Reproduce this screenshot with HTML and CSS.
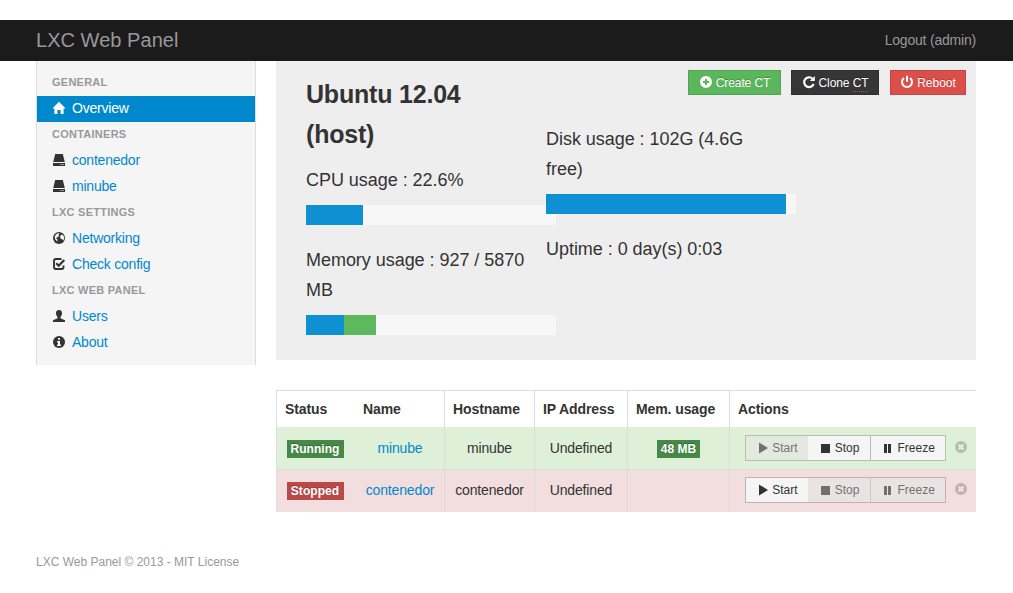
FILE: index.html
```html
<!DOCTYPE html>
<html lang="en">
<head>
<meta charset="utf-8">
<title>LXC Web Panel</title>
<link rel="stylesheet" href="styles.css">
</head>
<body>
<svg class="defs" width="0" height="0">
  <symbol id="home" viewBox="0 0 14 14"><path d="M7 .8 13.6 7.500H11.600V13H8.600V9H5.400V13H2.400V7.500H.4Z"/></symbol>
  <symbol id="hdd" viewBox="0 0 14 14"><path d="M3.200 1h7.600L12.800 9H1.200ZM1 10h12v3H1Z"/><path class="gap" d="M8.500 11h1v1h-1zM10.500 11h1v1h-1z"/></symbol>
  <symbol id="globe" viewBox="0 0 14 14"><circle cx="7" cy="7" r="6"/><path class="gap" d="M7.500 2 6 3.500l1 .8L5.800 6 3.500 7l1.800 1.500L5 10.500 3 8.500 2.300 6 3.500 3.500 5.500 2.200ZM9 3.500l2.200 1L12 7l-1 2.500L9.500 8 8 7.500 7.800 5.500Z" transform="translate(.3 0)"/></symbol>
  <symbol id="check" viewBox="0 0 14 14"><path d="M9.500 2H4Q2 2 2 4v6q0 2 2 2h5.500q2 0 2-2V8.500" fill="none" stroke="currentColor" stroke-width="1.900"/><path d="M4.200 6.200 6.700 8.700 12.300 3" fill="none" stroke="currentColor" stroke-width="2.200"/></symbol>
  <symbol id="user" viewBox="0 0 14 14"><path d="M7 1c2.300 0 3.200 1.600 3 3.600-.1 1.500-.7 2.600-1.500 3.300v1.300L13 11.300V13H1v-1.700l4.500-2.100V7.900C4.700 7.200 4.100 6.100 4 4.600 3.800 2.600 4.700 1 7 1Z"/></symbol>
  <symbol id="info" viewBox="0 0 14 14"><circle cx="7" cy="7" r="6"/><path class="gap" d="M6 3h2v1.800H6zM5 6h3v3.500h1V11H5V9.500h1v-2H5z"/></symbol>
  <symbol id="plus" viewBox="0 0 14 14"><path fill-rule="evenodd" d="M7 1a6 6 0 1 0 0 12A6 6 0 0 0 7 1ZM6 4h2v2h2v2H8v2H6V8H4V6h2Z"/></symbol>
  <symbol id="repeat" viewBox="0 0 14 14"><path d="M11.600 9A4.900 4.900 0 1 1 10.300 3.500" fill="none" stroke="currentColor" stroke-width="2.200"/><path d="M12.800 1v5H7.800Z"/></symbol>
  <symbol id="power" viewBox="0 0 14 14"><path d="M4 3A5 5 0 1 0 10 3" fill="none" stroke="currentColor" stroke-width="2"/><path d="M6 .8h2v6H6z"/></symbol>
  <symbol id="play" viewBox="0 0 14 14"><path d="M3 1.500 12 7 3 12.500Z"/></symbol>
  <symbol id="stop" viewBox="0 0 14 14"><path d="M2 3h9v9H2z"/></symbol>
  <symbol id="pause" viewBox="0 0 14 14"><path d="M2 3h3v9H2zM6 3h3v9H6z"/></symbol>
  <symbol id="remove" viewBox="0 0 14 14"><path fill-rule="evenodd" d="M7 1a6 6 0 1 0 0 12A6 6 0 0 0 7 1ZM5 4 7 5 9 4 10 5 9 7 10 9 9 10 7 9 5 10 4 9 5 7 4 5Z"/></symbol>
</svg>
<header class="navbar">
  <a class="brand">LXC Web Panel</a>
  <a class="logout">Logout (admin)</a>
</header>
<div class="container">
  <nav class="sidebar">
    <h6>GENERAL</h6>
    <a class="active"><svg class="icon"><use href="#home"/></svg><span>Overview</span></a>
    <h6>CONTAINERS</h6>
    <a><svg class="icon"><use href="#hdd"/></svg><span>contenedor</span></a>
    <a><svg class="icon"><use href="#hdd"/></svg><span>minube</span></a>
    <h6>LXC SETTINGS</h6>
    <a><svg class="icon"><use href="#globe"/></svg><span>Networking</span></a>
    <a><svg class="icon"><use href="#check"/></svg><span>Check config</span></a>
    <h6>LXC WEB PANEL</h6>
    <a><svg class="icon"><use href="#user"/></svg><span>Users</span></a>
    <a><svg class="icon"><use href="#info"/></svg><span>About</span></a>
  </nav>
  <main>
    <section class="hero">
      <div class="column">
        <h3>Ubuntu 12.04 (host)</h3>
        <p>CPU usage : 22.6%</p>
        <div class="progress"><div class="bar" style="width:57px"></div></div>
        <p>Memory usage : 927 / 5870 MB</p>
        <div class="progress"><div class="bar" style="width:38px"></div><div class="bar cache" style="width:32px"></div></div>
      </div>
      <div class="column second">
        <p class="disk">Disk usage : 102G (4.6G free)</p>
        <div class="progress"><div class="bar" style="width:240px"></div></div>
        <p>Uptime : 0 day(s) 0:03</p>
      </div>
      <div class="tools">
        <a class="btn create"><svg class="icon"><use href="#plus"/></svg><span>Create <abbr>CT</abbr></span></a>
        <a class="btn clone"><svg class="icon"><use href="#repeat"/></svg><span>Clone <abbr>CT</abbr></span></a>
        <a class="btn reboot"><svg class="icon"><use href="#power"/></svg><span>Reboot</span></a>
      </div>
    </section>
    <table>
      <colgroup><col class="c1"><col class="c2"><col class="c3"><col class="c4"><col class="c5"><col class="c6"></colgroup>
      <thead><tr><th>Status</th><th class="plain">Name</th><th>Hostname</th><th>IP Address</th><th>Mem. usage</th><th>Actions</th></tr></thead>
      <tbody>
        <tr class="running">
          <td class="status"><span class="label">Running</span></td><td class="plain"><a>minube</a></td><td>minube</td><td>Undefined</td><td><span class="label mem">48 MB</span></td>
          <td><div class="actions"><div class="group"><span class="act off"><svg class="icon"><use href="#play"/></svg>Start</span><span class="act"><svg class="icon"><use href="#stop"/></svg>Stop</span><span class="act"><svg class="icon"><use href="#pause"/></svg>Freeze</span></div><svg class="icon remove"><use href="#remove"/></svg></div></td>
        </tr>
        <tr class="stopped">
          <td class="status"><span class="label">Stopped</span></td><td class="plain"><a>contenedor</a></td><td>contenedor</td><td>Undefined</td><td></td>
          <td><div class="actions"><div class="group"><span class="act"><svg class="icon"><use href="#play"/></svg>Start</span><span class="act off"><svg class="icon"><use href="#stop"/></svg>Stop</span><span class="act off"><svg class="icon"><use href="#pause"/></svg>Freeze</span></div><svg class="icon remove"><use href="#remove"/></svg></div></td>
        </tr>
      </tbody>
    </table>
  </main>
</div>
<footer>LXC Web Panel © 2013 - MIT License</footer>
</body>
</html>
```
FILE: styles.css
```css
* { box-sizing: border-box; }
body { margin: 0; padding-top: 20px; background: #fff; color: #333; font: 14px/20px "Liberation Sans", Arial, sans-serif; overflow: hidden; }
.defs { position: absolute; }
.icon { width: 14px; height: 14px; fill: currentColor; flex: none; }
.gap { fill: #f5f5f5; }
.navbar { display: flex; justify-content: space-between; height: 41px; padding: 0 37px 0 36px; background: #1b1b1b; color: #999; line-height: 40px; }
.brand { font-size: 20px; letter-spacing: .04px; }
.logout { letter-spacing: -.2px; }
.container { display: flex; gap: 20px; width: 940px; margin-left: 36px; }
.sidebar { width: 220px; height: 304px; padding: 9px 0; background: #f5f5f5; border: solid #ddd; border-width: 0 1px; }
.sidebar h6 { margin: 0; height: 26px; padding: 0 15px; font-size: 11px; line-height: 25px; letter-spacing: .25px; color: #999; }
.sidebar a { display: flex; align-items: center; gap: 6px; height: 26px; padding: 0 15px 2px; color: #333; letter-spacing: -.22px; }
.sidebar a span { color: #08c; }
.sidebar .active { background: #08c; color: #fff; }
.sidebar .active span { color: #fff; }
main { width: 700px; }
.hero { position: relative; display: flex; gap: 20px; height: 299px; padding: 13px 30px 0; background: #eee; font-size: 18px; line-height: 30px; letter-spacing: -.04px; }
.column { width: 220px; }
h3 { margin: 0 0 11px; font-size: 25px; line-height: 40px; width: 180px; letter-spacing: -.2px; }
.hero p { margin: 0 0 10px; }
.progress { display: flex; width: 250px; height: 20px; margin-bottom: 20px; background: #f7f7f7; }
.bar { background: #0e90d2; }
.cache { background: #5eb95e; }
.second { padding-top: 50px; }
.tools { position: absolute; right: 10px; top: 9px; display: flex; letter-spacing: 0; }
.btn { display: flex; align-items: center; justify-content: center; gap: 3px; height: 25px; color: #fff; font-size: 12px; line-height: 20px; text-shadow: 0 -1px 0 rgba(0,0,0,.25); border: 1px solid rgba(0,0,0,.1); }
.btn .icon { margin-top: -1px; }
.create { width: 93px; background: #5bb75b; margin-right: 10px; letter-spacing: -.1px; }
.clone { width: 88px; background: #363636; margin-right: 11px; letter-spacing: -.1px; }
.reboot { width: 76px; background: #da4f4a; }
abbr { padding-bottom: 1px; border-bottom: 1px dotted rgba(153,153,153,.6); }
table { width: 700px; margin-top: 30px; border-collapse: separate; border-spacing: 0; table-layout: fixed; border-top: 1px solid #ddd; }
.c1 { width: 79px; } .c2 { width: 89px; } .c3 { width: 90px; } .c4 { width: 93px; } .c5 { width: 102px; } .c6 { width: 247px; }
th, td { padding: 0; border-left: 1px solid #ddd; }
th { height: 36px; padding-left: 8px; text-align: left; letter-spacing: -.1px; }
th.plain { padding-left: 7px; }
td { height: 42px; text-align: center; letter-spacing: -.15px; }
.plain { border-left-color: transparent; }
.running td { background: #dff0d8; }
.stopped td { height: 43px; padding-bottom: 2px; background: #f2dede; border-top: 1px solid #ddd; }
.stopped .plain { border-left-color: #f2dede; }
td a { color: #08c; }
td.status { padding-right: 2px; }
.label { display: inline-block; width: 57px; height: 18px; font-size: 12px; font-weight: bold; line-height: 18px; letter-spacing: .05px; color: #fff; text-shadow: 0 -1px 0 rgba(0,0,0,.25); background: #468847; vertical-align: middle; }
.mem { width: 43px; }
.stopped .label { background: #b94a48; }
.actions { display: flex; align-items: center; padding-left: 15px; gap: 8px; letter-spacing: 0; }
.group { display: flex; width: 201px; height: 26px; border: 1px solid rgba(0,0,0,.2); font-size: 12px; line-height: 24px; }
.act { display: flex; align-items: center; justify-content: center; gap: 2px; width: 62px; background: #f5f5f5; }
.act + .act { width: 63px; }
.act:last-child { width: 75px; border-left: 1px solid #bbb; }
.act .icon { margin-top: -1px; }
.off { background: #e6e6e6; opacity: .65; }
.remove { color: #000; opacity: .2; margin-top: -2px; }
footer { margin: 40px 0 0 36px; color: #999; font-size: 12px; }
```
